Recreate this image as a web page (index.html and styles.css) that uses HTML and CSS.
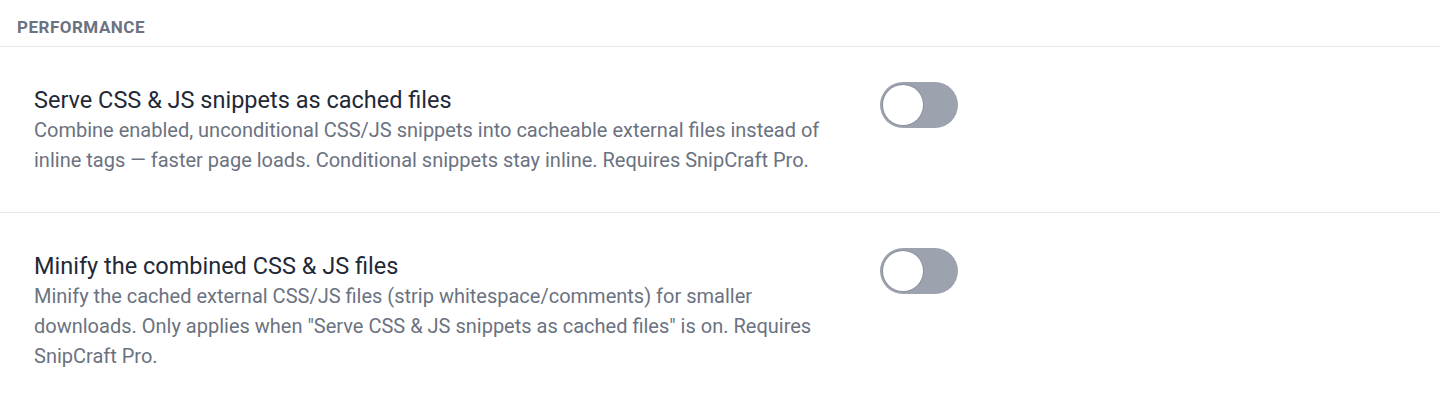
FILE: index.html
```html
<!DOCTYPE html>
<html lang="en">
<head>
    <meta charset="UTF-8">
    <meta name="viewport" content="width=device-width, initial-scale=1.0">
    <title>Performance settings</title>
    <link rel="stylesheet" href="styles.css">
</head>
<body>

<div class="section">
    <div class="section-title">Performance</div>

    <div class="setting-row">
        <div class="setting-text">
            <div class="setting-label">Serve CSS &amp; JS snippets as cached files</div>
            <p class="setting-desc">Combine enabled, unconditional CSS/JS snippets into cacheable external files instead of inline tags — faster page loads. Conditional snippets stay inline. Requires SnipCraft Pro.</p>
        </div>
        <label class="toggle">
            <input type="checkbox">
            <span class="toggle-track"><span class="toggle-knob"></span></span>
        </label>
    </div>

    <div class="setting-row">
        <div class="setting-text">
            <div class="setting-label">Minify the combined CSS &amp; JS files</div>
            <p class="setting-desc">Minify the cached external CSS/JS files (strip whitespace/comments) for smaller downloads. Only applies when "Serve CSS &amp; JS snippets as cached files" is on. Requires SnipCraft Pro.</p>
        </div>
        <label class="toggle">
            <input type="checkbox">
            <span class="toggle-track"><span class="toggle-knob"></span></span>
        </label>
    </div>
</div>

</body>
</html>
```

FILE: styles.css
```css
body {
    margin: 0;
    background: #ffffff;
    font-family: Roboto, "Liberation Sans", sans-serif;
}

/* section header */
.section-title {
    font-size: 17px;
    font-weight: 700;
    letter-spacing: 0.5px;
    line-height: 20px;
    text-transform: uppercase;
    color: #6b7280;
    padding: 17px 17px 9px;
    border-bottom: 1px solid #e5e7eb;
}

/* one setting per row */
.setting-row {
    display: flex;
    align-items: flex-start;
    gap: 26px;
    padding: 38px 34px 37px;
    border-bottom: 1px solid #e5e7eb;
}

.setting-row:last-child {
    border-bottom: none;
}

.setting-text {
    flex: 0 0 820px;
}

.setting-label {
    font-size: 23.5px;
    line-height: 30px;
    color: #1f2937;
}

.setting-desc {
    margin: 0;
    font-size: 20px;
    line-height: 30px;
    color: #6b7280;
}

/* switch */
.toggle {
    margin-top: -3px;
    cursor: pointer;
}

.toggle input {
    display: none;
}

.toggle-track {
    display: flex;
    align-items: center;
    width: 78px;
    height: 46px;
    box-sizing: border-box;
    padding: 3px;
    border-radius: 23px;
    background: #9ca3af;
}

.toggle-knob {
    width: 40px;
    height: 40px;
    border-radius: 50%;
    background: #ffffff;
    box-shadow: 0 0 0 1px #8b919b;
}

.toggle input:checked + .toggle-track {
    background: #4f46e5;
    justify-content: flex-end;
}
```
